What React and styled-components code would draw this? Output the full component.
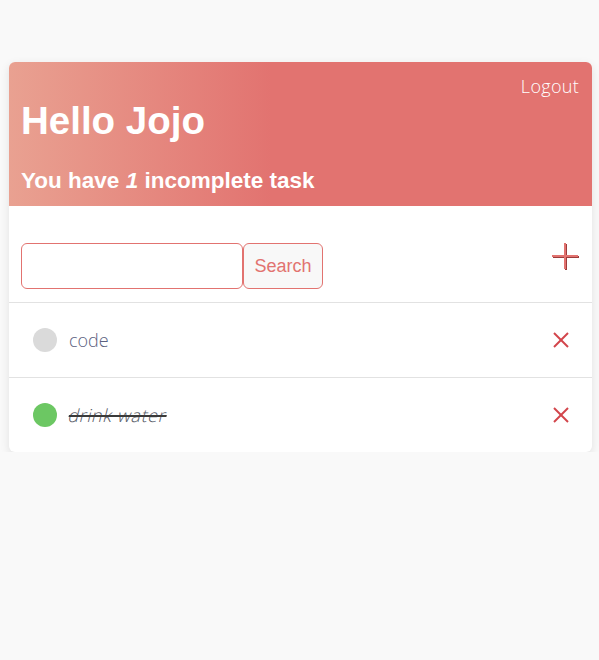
import React from "react"
import styled, { createGlobalStyle } from "styled-components"

const GlobalStyle = createGlobalStyle`
  body {
    margin: 0;
    background: #f9f9f9;
    font-family: "Liberation Sans", Arial, sans-serif;
  }
`

const tasks = [
  { id: 1, text: "code", done: false },
  { id: 2, text: "drink water", done: true },
]

export default function App() {
  const left = tasks.filter(t => !t.done).length
  return (
    <Page>
      <GlobalStyle />
      <Card>
        <Header>
          <Logout>Logout</Logout>
          <Title>Hello Jojo</Title>
          <Subtitle>
            You have <em>{left}</em> incomplete task
          </Subtitle>
        </Header>
        <SearchRow>
          <SearchForm>
            <SearchInput />
            <SearchButton>Search</SearchButton>
          </SearchForm>
          <AddButton aria-label="add">
            <svg width="28" height="28" viewBox="0 0 28 28">
              <g stroke="#9c3b3b" strokeWidth="2" transform="translate(1 1)">
                <line x1="13" y1="0" x2="13" y2="26" />
                <line x1="0" y1="13" x2="26" y2="13" />
              </g>
              <g stroke="#e27370" strokeWidth="2">
                <line x1="13" y1="0" x2="13" y2="26" />
                <line x1="0" y1="13" x2="26" y2="13" />
              </g>
            </svg>
          </AddButton>
        </SearchRow>
        {tasks.map(task => (
          <TaskRow key={task.id}>
            <Dot done={task.done} />
            <TaskText done={task.done}>{task.text}</TaskText>
            <DeleteButton aria-label="delete">
              <svg width="16" height="16" viewBox="0 0 16 16">
                <g stroke="#d2454b" strokeWidth="2">
                  <line x1="1" y1="1" x2="15" y2="15" />
                  <line x1="15" y1="1" x2="1" y2="15" />
                </g>
              </svg>
            </DeleteButton>
          </TaskRow>
        ))}
      </Card>
    </Page>
  )
}

const Page = styled.div`
  padding: 62px 7px 0 9px;
`

const Card = styled.div`
  background: #fff;
  border-radius: 6px;
  overflow: hidden;
  box-shadow: 0 3px 10px rgba(0, 0, 0, 0.1);
`

const Header = styled.div`
  position: relative;
  height: 144px;
  box-sizing: border-box;
  padding: 0 12px;
  color: #fff;
  background: linear-gradient(90deg, #e9a191 0%, #e27370 45%, #e27370 100%);
`

const Logout = styled.div`
  position: absolute;
  top: 12px;
  right: 13px;
  font-family: "Open Sans", sans-serif;
  font-weight: 300;
  font-size: 18px;
  letter-spacing: 0.3px;
`

const Title = styled.h1`
  margin: 0;
  padding-top: 37px;
  font-size: 38.5px;
  line-height: 44px;
  font-weight: bold;
`

const Subtitle = styled.h2`
  margin: 0;
  padding-top: 25px;
  font-size: 22.5px;
  line-height: 26px;
  font-weight: bold;

  em {
    font-style: italic;
  }
`

const SearchRow = styled.div`
  display: flex;
  align-items: flex-start;
  justify-content: space-between;
  padding: 37px 12px 13px 12px;
  border-bottom: 1px solid #e2e2e2;
`

const SearchForm = styled.div`
  display: flex;
`

const SearchInput = styled.input`
  width: 222px;
  height: 46px;
  box-sizing: border-box;
  border: 1px solid #e27370;
  border-radius: 6px;
  outline: none;
`

const SearchButton = styled.button`
  width: 80px;
  height: 46px;
  border: 1px solid #e27370;
  border-radius: 6px;
  background: #f8f8f8;
  color: #e27370;
  font-family: "Liberation Sans", Arial, sans-serif;
  font-size: 18px;
`

const AddButton = styled.button`
  border: none;
  background: none;
  padding: 0;
  display: flex;
`

const TaskRow = styled.div`
  display: flex;
  align-items: center;
  height: 74px;
  padding: 0 23px 0 24px;
  & + & {
    border-top: 1px solid #e2e2e2;
  }
`

const Dot = styled.span`
  width: 24px;
  height: 24px;
  border-radius: 50%;
  background: ${p => (p.done ? "#6cc763" : "#dadada")};
`

const TaskCell = styled.span`
  flex: 1;
  margin-left: 12px;
`

const Label = styled.span`
  display: inline-block;
  font-family: "Open Sans", sans-serif;
  font-weight: 300;
  font-size: 18px;
  color: ${p => (p.done ? "#555a66" : "#5b6180")};
  letter-spacing: ${p => (p.done ? "0.6px" : "0")};
  transform: ${p => (p.done ? "skewX(-14deg)" : "none")};
  text-decoration: ${p => (p.done ? "line-through" : "none")};
  text-decoration-color: #3a3a3a;
  text-decoration-thickness: 2px;
`

const TaskText = ({ done, children }) => (
  <TaskCell>
    <Label done={done}>{children}</Label>
  </TaskCell>
)

const DeleteButton = styled.button`
  border: none;
  background: none;
  padding: 0;
  display: flex;
`
